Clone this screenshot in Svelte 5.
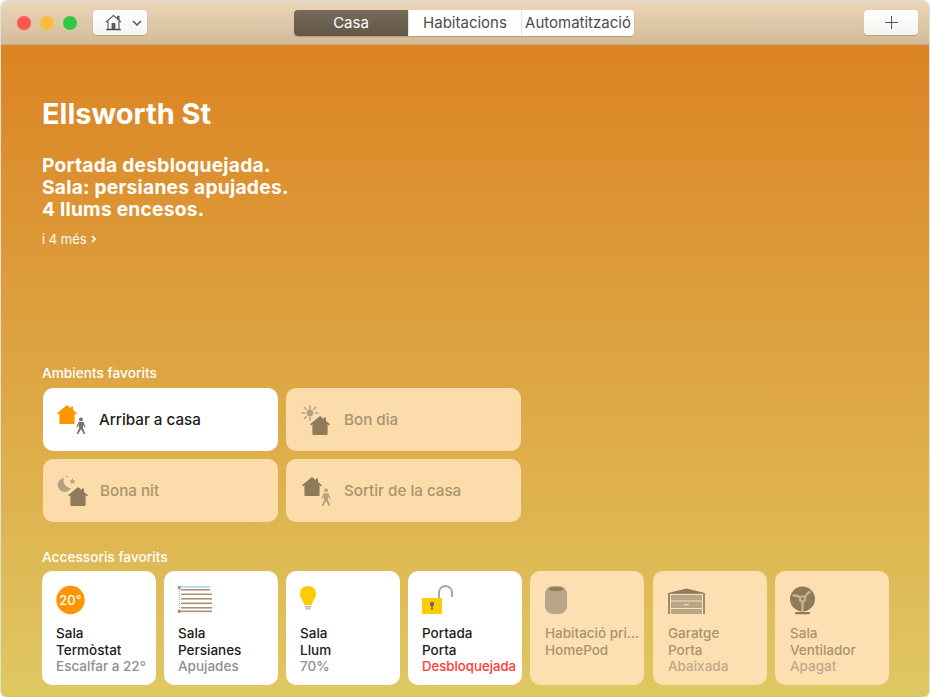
<script>
  const scenes = [
    { name: 'Arribar a casa', icon: 'arrive', on: true },
    { name: 'Bon dia', icon: 'morning', on: false },
    { name: 'Bona nit', icon: 'night', on: false },
    { name: 'Sortir de la casa', icon: 'leave', on: false }
  ];

  const accessories = [
    { room: 'Sala', name: 'Termòstat', status: 'Escalfar a 22°', icon: 'thermostat', on: true },
    { room: 'Sala', name: 'Persianes', status: 'Apujades', icon: 'blinds', on: true },
    { room: 'Sala', name: 'Llum', status: '70%', icon: 'bulb', on: true },
    { room: 'Portada', name: 'Porta', status: 'Desbloquejada', icon: 'lock', on: true, alert: true },
    { room: 'Habitació pri...', name: 'HomePod', status: '', icon: 'homepod', on: false },
    { room: 'Garatge', name: 'Porta', status: 'Abaixada', icon: 'garage', on: false },
    { room: 'Sala', name: 'Ventilador', status: 'Apagat', icon: 'fan', on: false }
  ];

  const housePath = 'M10 0 L14 3.2 V1.4 H16 V4.9 L20 8.2 L19 9.4 L17.6 8.3 V18 Q17.6 19 16.6 19 H3.4 Q2.4 19 2.4 18 V8.3 L1 9.4 L0 8.2 Z';
  const walkerPath = 'M6 0.5 a2 2 0 1 1 -0.01 0 Z M3.6 5.4 H8.4 L10.6 11 L9.4 11.5 L8 8.6 V12.4 L10.4 19 H8.8 L6 13.6 L3.2 19 H1.6 L4 12.4 V8.6 L2.6 11.5 L1.4 11 Z';
</script>

{#snippet home(x, y, scale, fill)}
  <path d={housePath} transform="translate({x} {y}) scale({scale})" fill={fill} />
{/snippet}

{#snippet sceneIcon(kind)}
  <svg class="scene-icon" viewBox="0 0 36 32" width="36" height="32">
    {#if kind === 'arrive'}
      {@render home(2, 1, 1, '#ff9500')}
      <path d={walkerPath} transform="translate(20 13) scale(1 0.9)" fill="#7b736a" />
    {:else if kind === 'leave'}
      {@render home(4, 2, 1, '#8f7a5c')}
      <path d={walkerPath} transform="translate(22 13) scale(1 0.95)" fill="#b5a283" />
    {:else if kind === 'morning'}
      <g stroke="#b5a283" stroke-width="1.5" stroke-linecap="round">
        <path d="M12 2 V5 M12 16 V13.5 M4 9 H6.6 M20 9 H17.6 M6.3 3.3 L8.2 5.2 M17.7 3.3 L15.8 5.2 M6.3 14.7 L8.2 12.8" />
      </g>
      <circle cx="12" cy="9" r="3.4" fill="#b5a283" />
      {@render home(12, 12, 1, '#8f7a5c')}
    {:else}
      <path d="M9 3 A7 7 0 1 0 16 13 A7.5 7.5 0 0 1 9 3 Z" fill="#b5a283" />
      <path d="M17.5 3 L18.4 5.2 L20.6 5.4 L18.9 6.9 L19.5 9 L17.5 7.9 L15.5 9 L16.1 6.9 L14.4 5.4 L16.6 5.2 Z" fill="#b5a283" />
      <circle cx="12" cy="1.6" r="0.8" fill="#b5a283" />
      {@render home(13, 12, 1, '#8f7a5c')}
    {/if}
  </svg>
{/snippet}

{#snippet accessoryIcon(kind)}
  <svg class="acc-icon" viewBox="0 0 40 32" width="40" height="32">
    {#if kind === 'thermostat'}
      <circle cx="14.5" cy="15" r="14.2" fill="#ff9500" />
      <text x="14.5" y="20" text-anchor="middle" class="temp">20°</text>
    {:else if kind === 'blinds'}
      <rect x="0" y="1" width="32" height="1.6" fill="#a9d8f0" />
      <path d="M1.5 2 V26" stroke="#7fbde0" stroke-width="1" stroke-dasharray="1 1" />
      <rect x="0" y="1" width="2.6" height="3" fill="#a68a68" />
      <rect x="0" y="25" width="2.6" height="3" fill="#a68a68" />
      {#each [4, 8.5, 13, 17.5, 22, 25.5] as y, i}
        <rect x="3" {y} width={i === 0 ? 29 : 31} height="1.6" fill="#ad9271" />
      {/each}
    {:else if kind === 'bulb'}
      <path d="M8 1 C14 1 16 5.4 16 8.6 C16 13 13 15 11.6 20 H4.4 C3 15 0 13 0 8.6 C0 5.4 2 1 8 1 Z" fill="#ffcc00" />
      <rect x="4.8" y="21" width="6.4" height="1.5" fill="#b8b8b8" />
      <rect x="5.4" y="23.2" width="5.2" height="1.3" fill="#b8b8b8" />
    {:else if kind === 'lock'}
      <path d="M17 14 V7.5 A6.5 6.5 0 0 1 30 7.5 V12" fill="none" stroke="#a9a9ad" stroke-width="2" />
      <rect x="0" y="13" width="20" height="16" fill="#ffcc00" />
      <circle cx="10" cy="19" r="2.2" fill="#6f6a5c" />
      <rect x="9.1" y="19" width="1.8" height="6" fill="#6f6a5c" />
    {:else if kind === 'homepod'}
      <rect x="0" y="1" width="22" height="28" rx="8" fill="#b9a688" />
      <ellipse cx="11" cy="4" rx="7.5" ry="2" fill="#8f7a5c" />
    {:else if kind === 'garage'}
      <path d="M0 8 L18.5 3.5 L37 8 Z" fill="#8f7a5c" />
      <path d="M0 8 V29 H2 V9 H35 V29 H37 V8 Z" fill="#a08c6d" />
      <rect x="3" y="10" width="31" height="5.5" fill="#b9a688" />
      <rect x="3" y="16.5" width="31" height="6.5" fill="#b9a688" />
      <rect x="3" y="24" width="31" height="5" fill="#b9a688" />
      <rect x="16" y="19.2" width="5" height="1.2" fill="#fddfb2" />
    {:else}
      <circle cx="12.5" cy="14" r="12.5" fill="#8f7a5c" />
      <g fill="none" stroke="#c4b291" stroke-width="2.4">
        <circle cx="12.5" cy="14" r="2.6" />
        <path d="M10.4 12.4 C8 11 5 10 2.6 11" />
        <path d="M14.8 12.8 C16 10 18 7.6 20.5 6.5" />
        <path d="M12.5 16.6 V26" />
      </g>
      <rect x="5" y="27" width="15" height="2.2" rx="1" fill="#8f7a5c" />
    {/if}
  </svg>
{/snippet}

<div class="window">
  <header class="toolbar">
    <div class="lights">
      <span class="light red"></span>
      <span class="light yellow"></span>
      <span class="light green"></span>
    </div>
    <button class="home-btn">
      <svg viewBox="0 0 18 17" width="17" height="17" fill="none" stroke="#4a4a4a" stroke-width="1.1">
        <path d="M1 8.2 L9 1 L17 8.2 M13.4 4.8 V2 H14.8 V6.2 M3.2 7 V15.6 H14.8 V7" />
        <path d="M1.2 16 H16.8" stroke-width="1.3" />
        <rect x="7" y="9" width="4" height="6.6" fill="#5c5c5c" stroke="none" />
      </svg>
      <svg viewBox="0 0 10 6" width="10" height="6" fill="none" stroke="#555" stroke-width="1.5">
        <path d="M1 1 L5 5 L9 1" />
      </svg>
    </button>
    <div class="tabs">
      <span class="tab active">Casa</span>
      <span class="tab">Habitacions</span>
      <span class="tab">Automatització</span>
    </div>
    <button class="add-btn">
      <svg viewBox="0 0 13 13" width="13" height="13" stroke="#555" stroke-width="1"><path d="M6.5 0 V13 M0 6.5 H13" /></svg>
    </button>
  </header>

  <main class="content">
    <h1>Ellsworth St</h1>
    <p class="summary">Portada desbloquejada.<br />Sala: persianes apujades.<br />4 llums encesos.</p>
    <div class="more">i 4 més <svg viewBox="0 0 5 8" width="5" height="8" fill="none" stroke="#fff" stroke-width="1.6"><path d="M1 1 L4 4 L1 7" /></svg></div>

    <h2 class="scenes-title">Ambients favorits</h2>
    <div class="scenes">
      {#each scenes as scene}
        <div class="scene" class:on={scene.on}>
          {@render sceneIcon(scene.icon)}
          <span>{scene.name}</span>
        </div>
      {/each}
    </div>

    <h2 class="acc-title">Accessoris favorits</h2>
    <div class="accessories">
      {#each accessories as acc}
        <div class="accessory" class:on={acc.on}>
          {@render accessoryIcon(acc.icon)}
          <div class="acc-text">
            <div>{acc.room}</div>
            <div>{acc.name}</div>
            <div class="status" class:alert={acc.alert}>{acc.status}</div>
          </div>
        </div>
      {/each}
    </div>
  </main>
</div>

<style>
  :global(body) {
    background: #fff;
    font-family: Inter, "Liberation Sans", sans-serif;
  }

  .window {
    width: 928px;
    height: 696px;
    margin: 1px 0 0 1px;
    border-radius: 6px;
    overflow: hidden;
    display: flex;
    flex-direction: column;
    box-shadow: 0 0 0 1px rgba(0, 0, 0, 0.12);
  }

  .toolbar {
    height: 44px;
    flex: none;
    display: flex;
    align-items: center;
    padding: 0 11px 0 16px;
    background: linear-gradient(#ecd6b9, #d3bb98);
    border-bottom: 1px solid #c4ac88;
    box-sizing: border-box;
  }

  .lights {
    display: flex;
    gap: 9px;
  }

  .light {
    width: 14px;
    height: 14px;
    border-radius: 50%;
  }

  .red { background: #fc5753; }
  .yellow { background: #fdbc40; }
  .green { background: #33c748; }

  button {
    border: 0;
    padding: 0;
    background: linear-gradient(#fff, #f6f4f1);
    box-shadow: 0 1px 1px rgba(110, 80, 40, 0.3);
    border-radius: 4px;
    display: flex;
    align-items: center;
    justify-content: center;
    height: 25px;
  }

  .home-btn {
    width: 54px;
    margin-left: 16px;
    justify-content: flex-start;
    padding-left: 12px;
    gap: 10px;
  }

  .tabs {
    margin-left: 147px;
    display: flex;
    height: 26px;
    border-radius: 4px;
    overflow: hidden;
    background: #fff;
    box-shadow: 0 1px 1px rgba(110, 80, 40, 0.3);
    font-size: 15px;
    color: #4c4c4c;
  }

  .tab {
    display: flex;
    align-items: center;
    justify-content: center;
    width: 113px;
    border-left: 1px solid #e8e6e3;
    box-sizing: border-box;
    white-space: nowrap;
  }

  .tab:first-child {
    border-left: 0;
    width: 114px;
  }

  .tab.active {
    background: linear-gradient(#766a59, #635848);
    color: #fff;
  }

  .add-btn {
    width: 54px;
    margin-left: auto;
  }

  .content {
    flex: 1;
    padding: 0 0 0 41px;
    color: #fff;
    background: linear-gradient(#dc8323, #dfc862);
    display: flex;
    flex-direction: column;
    align-items: flex-start;
  }

  h1 {
    margin: 52px 0 0;
    font-size: 29px;
    line-height: 34px;
    font-weight: 700;
  }

  .summary {
    margin: 23px 0 0;
    font-size: 19.2px;
    letter-spacing: 0.25px;
    line-height: 22px;
    font-weight: 700;
  }

  .more {
    margin-top: 11px;
    font-size: 13px;
    line-height: 16px;
    display: flex;
    align-items: center;
    gap: 4px;
  }

  h2 {
    margin: 0;
    font-size: 13.7px;
    line-height: 16px;
    font-weight: 500;
  }

  .scenes-title {
    margin-top: 118px;
  }

  .scenes {
    margin: 7px 0 0 1px;
    display: grid;
    grid-template-columns: 235px 235px;
    grid-auto-rows: 63px;
    gap: 8px;
  }

  .scene {
    border-radius: 10px;
    background: #fddcab;
    color: #a8946f;
    display: flex;
    align-items: center;
    padding-left: 12px;
    gap: 9px;
    font-size: 15.2px;
    font-weight: 500;
  }

  .scene:nth-child(even) {
    gap: 10px;
  }

  .scene.on {
    background: #fff;
    color: #1c1c1c;
    gap: 8px;
  }

  .scene-icon {
    flex: none;
  }

  .acc-title {
    margin-top: 27px;
  }

  .accessories {
    margin-top: 6px;
    display: flex;
    gap: 8px;
  }

  .accessory {
    width: 114px;
    height: 114px;
    box-sizing: border-box;
    padding: 14px 0 0 15px;
    border-radius: 10px;
    background: #fddfb2;
    color: #a8946f;
    display: flex;
    flex-direction: column;
    font-size: 13.5px;
    line-height: 16.5px;
    font-weight: 500;
  }

  .accessory:nth-child(6) {
    margin-left: 1px;
  }

  .accessory.on {
    background: #fff;
    color: #1c1c1c;
    padding-left: 14px;
  }

  .acc-icon {
    flex: none;
  }

  .acc-text {
    margin-top: 8px;
    white-space: nowrap;
  }

  .status {
    color: #bfab88;
    height: 16px;
  }

  .accessory.on .status {
    color: #8e8e93;
  }

  .accessory.on .status.alert {
    color: #ff3b30;
    font-size: 13.2px;
  }

  .temp {
    font-size: 13px;
    font-weight: 500;
    fill: #fff;
  }
</style>
